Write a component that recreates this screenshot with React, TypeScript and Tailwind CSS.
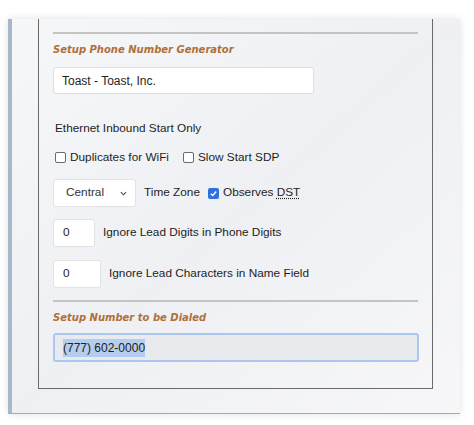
import React from "react";

function Heading({ children }: { children: React.ReactNode }) {
  return (
    <h3 className="text-[10px] leading-[14px] font-bold italic text-[#b06f37] font-['DejaVu_Sans',sans-serif]">
      {children}
    </h3>
  );
}

function Check({ checked = false, label }: { checked?: boolean; label: React.ReactNode }) {
  return (
    <label className="flex items-center gap-[4px]">
      {checked ? (
        <span className="flex h-[11px] w-[11px] items-center justify-center rounded-[2px] bg-[#2f6fe0]">
          <svg viewBox="0 0 10 10" className="h-[9px] w-[9px]">
            <path d="M2 5.2 4.2 7.3 8 2.8" fill="none" stroke="white" strokeWidth="1.6" />
          </svg>
        </span>
      ) : (
        <span className="h-[11px] w-[11px] rounded-[2px] border border-[#6b6b6b] bg-white" />
      )}
      <span>{label}</span>
    </label>
  );
}

export default function App() {
  return (
    <div className="h-[425px] w-[474px] bg-white pt-[19px] pl-[8px] font-['Liberation_Sans',sans-serif] text-[11.8px] text-[#1e1e1e]">
      <div className="h-[395px] w-[452px] border-l-[4px] border-b border-l-[#a8b7ca] border-b-[#a9a9a9] bg-gradient-to-br from-[#f6f7f9] via-[#eef0f3] to-[#f7f7f9] pl-[26px] shadow-[0_0_8px_rgba(0,0,0,0.12)]">
        <div className="flex h-[370px] w-[395px] flex-col border-x-[1.5px] border-b-[1.5px] border-[#6a6a6a] pl-[14px]">
          <div className="mt-[13px] w-[365px] border-t-2 border-[#c4c4c4]" />
          <div className="mt-[9px]">
            <Heading>Setup Phone Number Generator</Heading>
          </div>
          <input
            readOnly
            value="Toast - Toast, Inc."
            className="mt-[10px] h-[27px] w-[261px] rounded-[3px] border border-[#dedede] bg-white px-[8px] text-[12px] text-[#1e1e1e] outline-none"
          />
          <p className="mt-[26px] ml-[2px] leading-[16px]">Ethernet Inbound Start Only</p>
          <div className="mt-[13px] ml-[2px] flex items-center gap-[14px] leading-[16px]">
            <Check label="Duplicates for WiFi" />
            <Check label="Slow Start SDP" />
          </div>
          <div className="mt-[14px] flex items-center gap-[8px]">
            <div className="flex h-[28px] w-[83px] items-center justify-between rounded-[3px] border border-[#e2e2e2] bg-white pr-[8px] pl-[12px]">
              <span className="text-[#333]">Central</span>
              <svg viewBox="0 0 8 5" className="h-[5px] w-[7px]">
                <path d="M1 1l3 3 3-3" fill="none" stroke="#444" strokeWidth="1.2" />
              </svg>
            </div>
            <span>Time Zone</span>
            <Check
              checked
              label={
                <>
                  Observes <abbr className="underline decoration-dotted underline-offset-2">DST</abbr>
                </>
              }
            />
          </div>
          <div className="mt-[12px] flex items-center gap-[8px]">
            <div className="flex h-[28px] w-[42px] items-center rounded-[3px] border border-[#e2e2e2] bg-white pl-[9px]">0</div>
            <span>Ignore Lead Digits in Phone Digits</span>
          </div>
          <div className="mt-[13px] flex items-center gap-[8px]">
            <div className="flex h-[28px] w-[48px] items-center rounded-[3px] border border-[#e2e2e2] bg-white pl-[9px]">0</div>
            <span>Ignore Lead Characters in Name Field</span>
          </div>
          <div className="mt-[12px] w-[365px] border-t-2 border-[#c4c4c4]" />
          <div className="mt-[9px]">
            <Heading>Setup Number to be Dialed</Heading>
          </div>
          <div className="mt-[8px] flex h-[29px] w-[366px] items-center rounded-[3px] border-2 border-[#a9c8f0] bg-[#e8eaee] pl-[8px] text-[12px]">
            <span className="bg-[#b5cdee] text-[#222]">(777) 602-0000</span>
          </div>
        </div>
      </div>
    </div>
  );
}
